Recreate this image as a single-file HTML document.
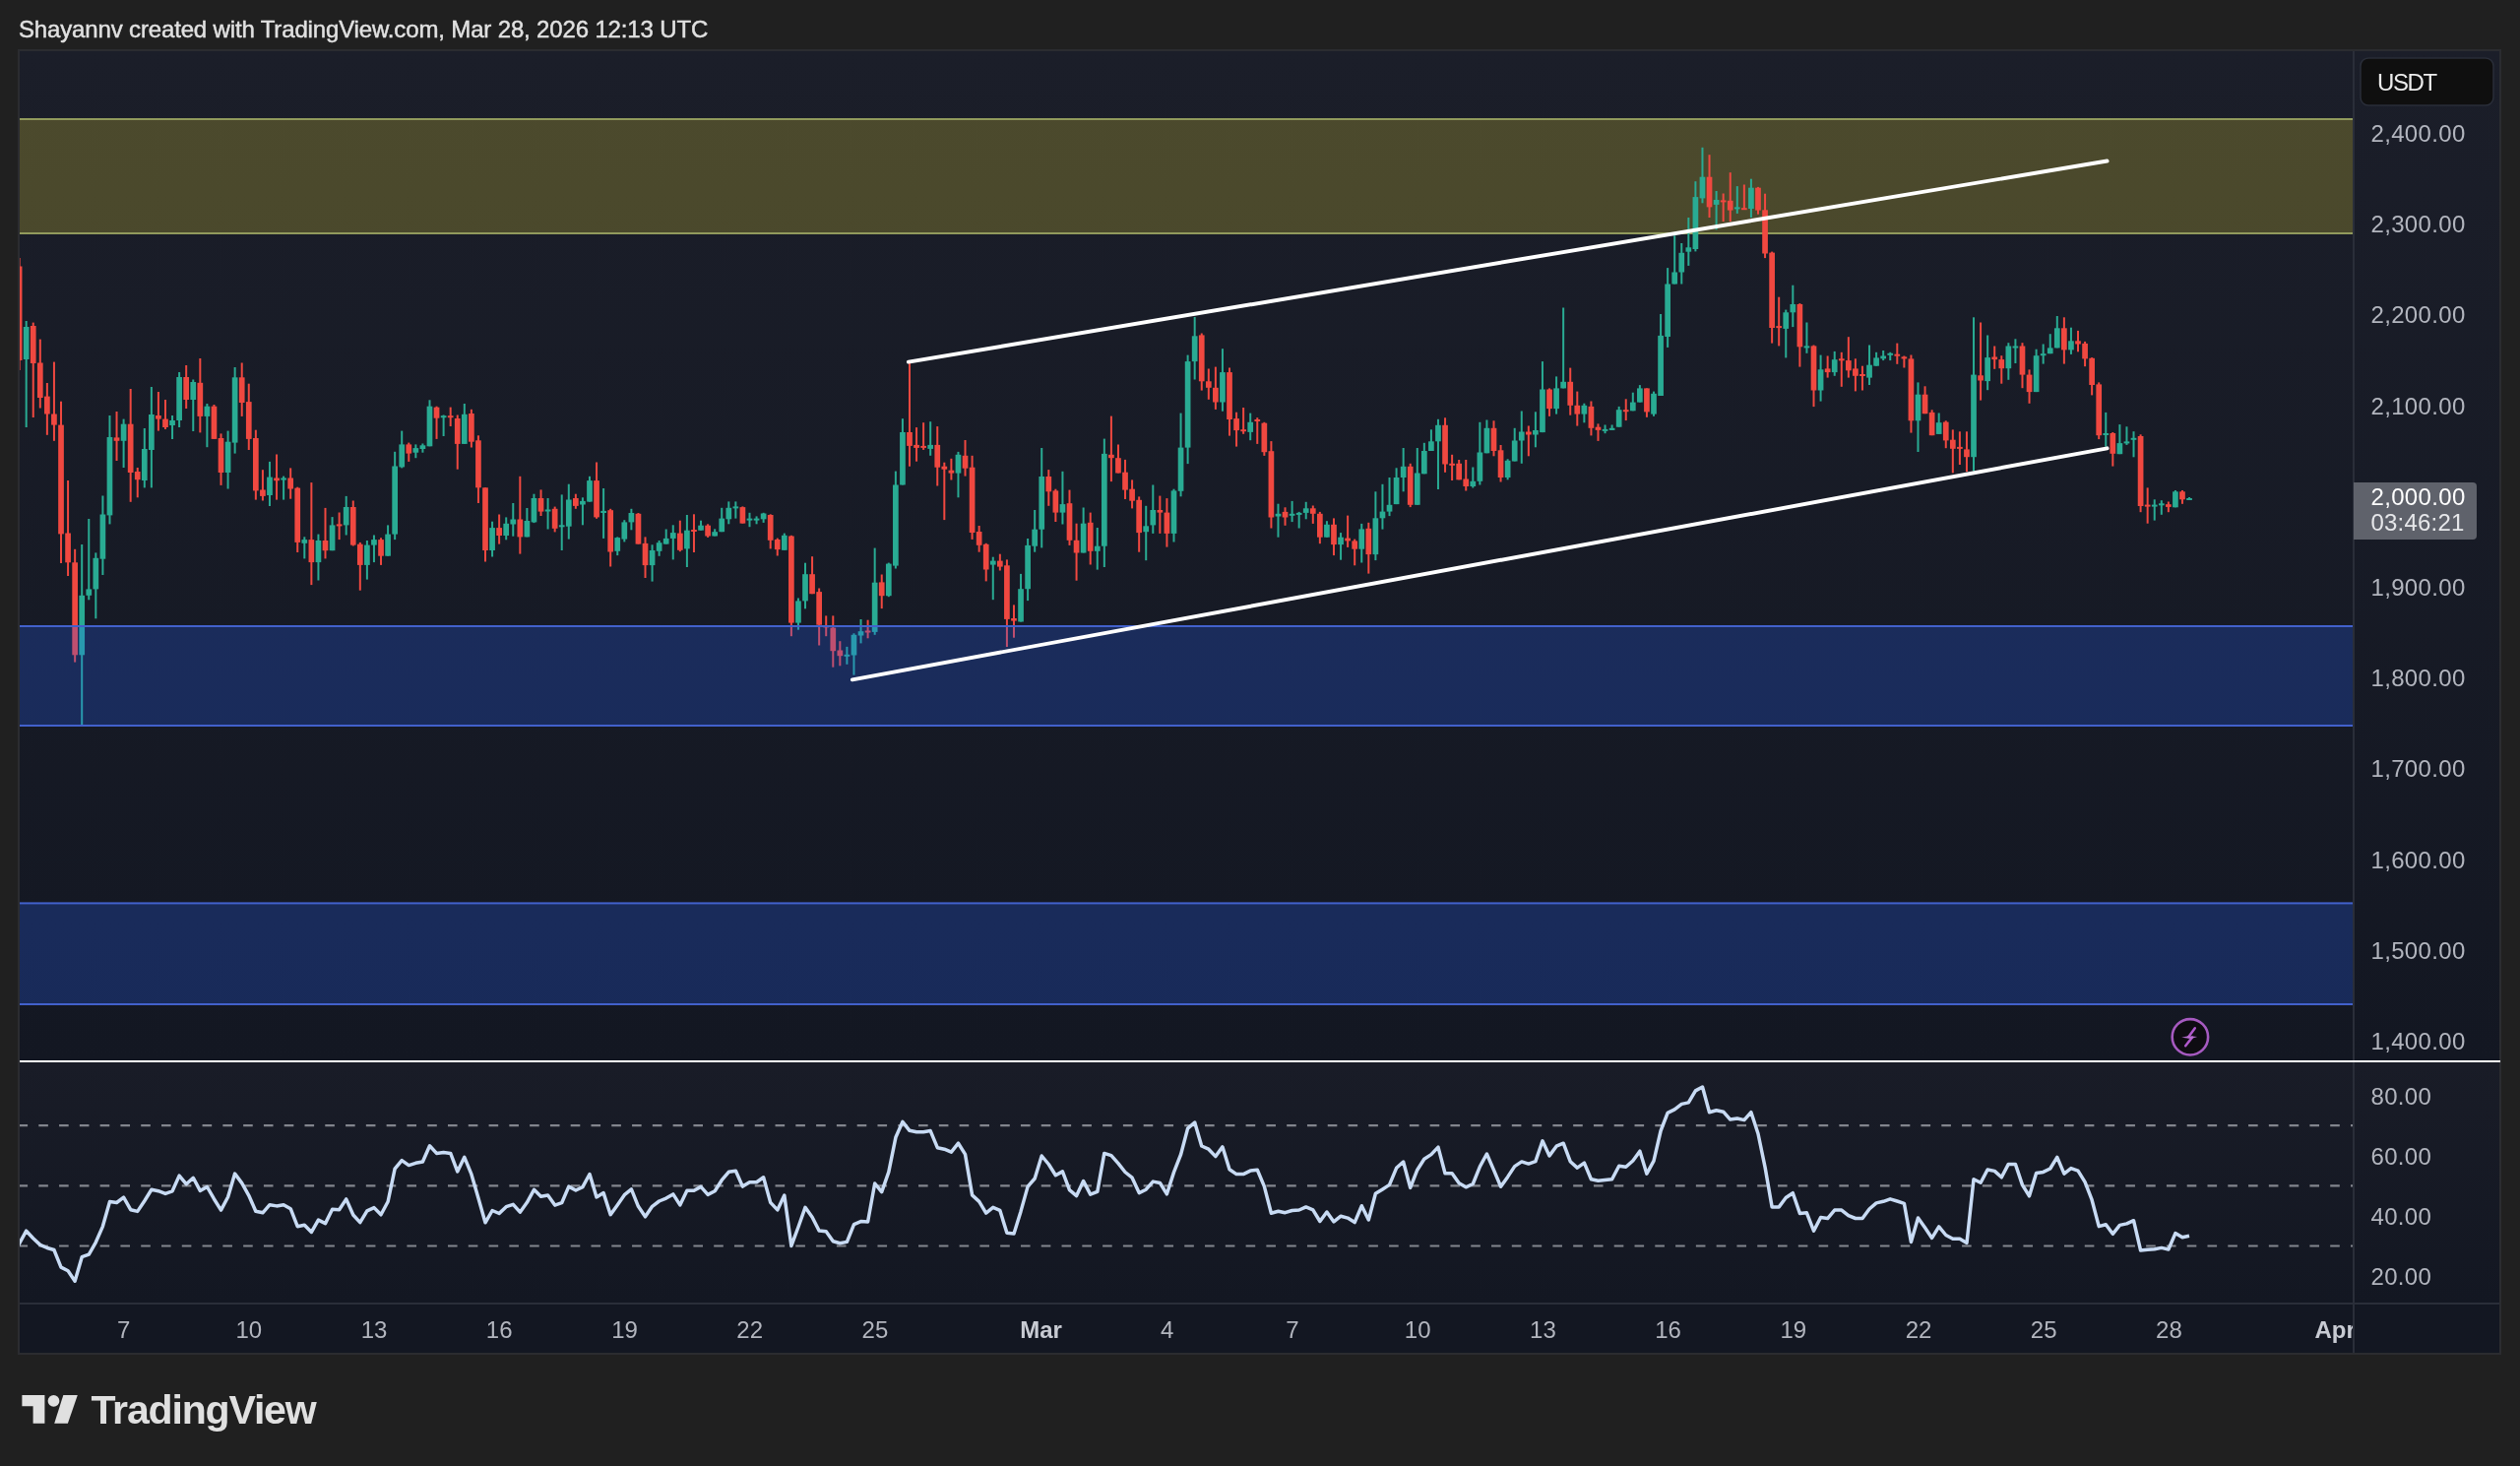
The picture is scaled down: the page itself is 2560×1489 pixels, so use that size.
<!DOCTYPE html><html><head><meta charset="utf-8"><style>
html,body{margin:0;padding:0;background:#202020;width:2560px;height:1489px;overflow:hidden}
svg{display:block;will-change:transform}
text{font-family:"Liberation Sans",sans-serif}
</style></head><body>
<svg width="2560" height="1489" viewBox="0 0 2560 1489">
<defs>
<linearGradient id="bg1" x1="0" y1="0" x2="0" y2="1"><stop offset="0" stop-color="#1b1e29"/><stop offset="1" stop-color="#131722"/></linearGradient>
<linearGradient id="bg2" x1="0" y1="0" x2="0" y2="1"><stop offset="0" stop-color="#191c27"/><stop offset="1" stop-color="#131722"/></linearGradient>
<clipPath id="mainclip"><rect x="20" y="52" width="2370" height="1025"/></clipPath>
<clipPath id="rsiclip"><rect x="20" y="1079" width="2370" height="244"/></clipPath>
<clipPath id="timeclip"><rect x="20" y="1325" width="2370" height="50"/></clipPath>
</defs>
<rect width="2560" height="1489" fill="#202020"/>
<text x="19" y="38" font-size="24" letter-spacing="-0.15" fill="#e1e1e1" stroke="#e1e1e1" stroke-width="0.45">Shayannv created with TradingView.com, Mar 28, 2026 12:13 UTC</text>
<rect x="18" y="50" width="2523" height="1326" fill="#2b2c30"/>
<rect x="20" y="52" width="2519" height="1025" fill="url(#bg1)"/>
<rect x="20" y="1079" width="2519" height="244" fill="url(#bg2)"/>
<rect x="20" y="1325" width="2519" height="49" fill="#131722"/>
<rect x="20" y="1323" width="2519" height="2" fill="#2a2e39"/>
<rect x="2390" y="52" width="2" height="1322" fill="#2a2e39"/>
<rect x="20" y="1077" width="2520" height="2" fill="#ffffff"/>
<g clip-path="url(#mainclip)">
<rect x="19" y="121" width="2371" height="116" fill="#ffeb3b" fill-opacity="0.215"/>
<rect x="19" y="120" width="2371" height="2" fill="#919a5c"/>
<rect x="19" y="236" width="2371" height="2" fill="#919a5c"/>
<rect x="18.61" y="262.0" width="2" height="114.0" fill="#f04840"/><rect x="25.68" y="326.0" width="2" height="108.0" fill="#29ab93"/><rect x="32.74" y="327.6" width="2" height="96.4" fill="#f04840"/><rect x="39.81" y="344.6" width="2" height="69.9" fill="#f04840"/><rect x="46.87" y="389.0" width="2" height="52.8" fill="#f04840"/><rect x="53.94" y="367.6" width="2" height="80.2" fill="#f04840"/><rect x="61.01" y="407.7" width="2" height="164.3" fill="#f04840"/><rect x="68.07" y="488.0" width="2" height="97.0" fill="#f04840"/><rect x="75.14" y="557.8" width="2" height="114.8" fill="#f04840"/><rect x="82.20" y="553.0" width="2" height="183.8" fill="#29ab93"/><rect x="89.27" y="527.0" width="2" height="82.3" fill="#29ab93"/><rect x="96.33" y="561.4" width="2" height="66.9" fill="#29ab93"/><rect x="103.40" y="503.5" width="2" height="80.5" fill="#29ab93"/><rect x="110.46" y="422.0" width="2" height="110.4" fill="#29ab93"/><rect x="117.53" y="418.0" width="2" height="50.0" fill="#f04840"/><rect x="124.60" y="425.6" width="2" height="49.4" fill="#29ab93"/><rect x="131.66" y="395.0" width="2" height="114.8" fill="#f04840"/><rect x="138.73" y="475.0" width="2" height="30.3" fill="#f04840"/><rect x="145.79" y="435.0" width="2" height="60.4" fill="#29ab93"/><rect x="152.86" y="393.0" width="2" height="102.4" fill="#29ab93"/><rect x="159.92" y="398.0" width="2" height="39.6" fill="#f04840"/><rect x="166.99" y="406.0" width="2" height="30.0" fill="#f04840"/><rect x="174.05" y="422.0" width="2" height="24.0" fill="#29ab93"/><rect x="181.12" y="378.0" width="2" height="56.0" fill="#29ab93"/><rect x="188.18" y="371.0" width="2" height="44.0" fill="#f04840"/><rect x="195.25" y="385.5" width="2" height="52.5" fill="#29ab93"/><rect x="202.32" y="364.0" width="2" height="75.4" fill="#f04840"/><rect x="209.38" y="410.0" width="2" height="44.2" fill="#29ab93"/><rect x="216.45" y="411.0" width="2" height="34.9" fill="#f04840"/><rect x="223.51" y="440.4" width="2" height="52.5" fill="#f04840"/><rect x="230.58" y="437.6" width="2" height="58.9" fill="#29ab93"/><rect x="237.64" y="373.0" width="2" height="87.6" fill="#29ab93"/><rect x="244.71" y="368.5" width="2" height="54.4" fill="#f04840"/><rect x="251.77" y="389.7" width="2" height="67.3" fill="#f04840"/><rect x="258.84" y="436.7" width="2" height="70.9" fill="#f04840"/><rect x="265.91" y="477.2" width="2" height="31.3" fill="#f04840"/><rect x="272.97" y="468.9" width="2" height="45.1" fill="#29ab93"/><rect x="280.04" y="461.5" width="2" height="46.1" fill="#f04840"/><rect x="287.10" y="483.6" width="2" height="24.0" fill="#29ab93"/><rect x="294.17" y="475.4" width="2" height="31.3" fill="#f04840"/><rect x="301.23" y="494.7" width="2" height="66.3" fill="#f04840"/><rect x="308.30" y="545.3" width="2" height="22.1" fill="#29ab93"/><rect x="315.36" y="490.1" width="2" height="104.0" fill="#f04840"/><rect x="322.43" y="542.6" width="2" height="46.9" fill="#29ab93"/><rect x="329.49" y="515.9" width="2" height="51.5" fill="#f04840"/><rect x="336.56" y="525.1" width="2" height="34.1" fill="#29ab93"/><rect x="343.63" y="520.5" width="2" height="27.6" fill="#f04840"/><rect x="350.69" y="503.9" width="2" height="39.6" fill="#29ab93"/><rect x="357.76" y="508.5" width="2" height="46.0" fill="#f04840"/><rect x="364.82" y="550.9" width="2" height="48.8" fill="#f04840"/><rect x="371.89" y="549.0" width="2" height="39.6" fill="#29ab93"/><rect x="378.95" y="543.5" width="2" height="27.6" fill="#29ab93"/><rect x="386.02" y="546.3" width="2" height="27.6" fill="#f04840"/><rect x="393.08" y="533.4" width="2" height="31.3" fill="#29ab93"/><rect x="400.15" y="458.8" width="2" height="89.3" fill="#29ab93"/><rect x="407.22" y="437.6" width="2" height="37.8" fill="#29ab93"/><rect x="414.28" y="449.6" width="2" height="19.3" fill="#f04840"/><rect x="421.35" y="451.4" width="2" height="13.8" fill="#29ab93"/><rect x="428.41" y="450.5" width="2" height="9.2" fill="#29ab93"/><rect x="435.48" y="406.3" width="2" height="47.0" fill="#29ab93"/><rect x="442.54" y="412.7" width="2" height="33.2" fill="#f04840"/><rect x="449.61" y="421.5" width="2" height="21.5" fill="#29ab93"/><rect x="456.67" y="413.6" width="2" height="19.4" fill="#f04840"/><rect x="463.74" y="421.5" width="2" height="55.2" fill="#f04840"/><rect x="470.80" y="410.0" width="2" height="40.9" fill="#29ab93"/><rect x="477.87" y="415.8" width="2" height="38.7" fill="#f04840"/><rect x="484.94" y="442.3" width="2" height="68.7" fill="#f04840"/><rect x="492.00" y="495.3" width="2" height="75.2" fill="#f04840"/><rect x="499.07" y="529.7" width="2" height="35.8" fill="#29ab93"/><rect x="506.13" y="522.5" width="2" height="30.1" fill="#f04840"/><rect x="513.20" y="525.4" width="2" height="22.9" fill="#29ab93"/><rect x="520.26" y="511.0" width="2" height="33.7" fill="#29ab93"/><rect x="527.33" y="483.8" width="2" height="78.8" fill="#f04840"/><rect x="534.39" y="516.0" width="2" height="29.4" fill="#29ab93"/><rect x="541.46" y="501.7" width="2" height="29.4" fill="#29ab93"/><rect x="548.53" y="497.4" width="2" height="26.6" fill="#f04840"/><rect x="555.59" y="506.0" width="2" height="31.5" fill="#29ab93"/><rect x="562.66" y="514.6" width="2" height="25.8" fill="#f04840"/><rect x="569.72" y="502.4" width="2" height="56.6" fill="#29ab93"/><rect x="576.79" y="491.7" width="2" height="55.9" fill="#29ab93"/><rect x="583.85" y="501.7" width="2" height="15.1" fill="#f04840"/><rect x="590.92" y="505.3" width="2" height="28.0" fill="#29ab93"/><rect x="597.98" y="483.8" width="2" height="25.8" fill="#29ab93"/><rect x="605.05" y="469.5" width="2" height="57.3" fill="#f04840"/><rect x="612.11" y="496.0" width="2" height="50.9" fill="#29ab93"/><rect x="619.18" y="516.8" width="2" height="58.7" fill="#f04840"/><rect x="626.25" y="545.4" width="2" height="18.7" fill="#29ab93"/><rect x="633.31" y="528.2" width="2" height="22.2" fill="#29ab93"/><rect x="640.38" y="516.8" width="2" height="21.5" fill="#29ab93"/><rect x="647.44" y="521.0" width="2" height="31.6" fill="#f04840"/><rect x="654.51" y="545.4" width="2" height="41.6" fill="#f04840"/><rect x="661.57" y="553.3" width="2" height="37.3" fill="#29ab93"/><rect x="668.64" y="549.0" width="2" height="15.8" fill="#29ab93"/><rect x="675.70" y="537.5" width="2" height="15.1" fill="#29ab93"/><rect x="682.77" y="533.3" width="2" height="35.1" fill="#29ab93"/><rect x="689.84" y="528.7" width="2" height="31.5" fill="#f04840"/><rect x="696.90" y="523.0" width="2" height="53.0" fill="#29ab93"/><rect x="703.97" y="522.3" width="2" height="38.7" fill="#f04840"/><rect x="711.03" y="528.7" width="2" height="10.0" fill="#29ab93"/><rect x="718.10" y="532.3" width="2" height="13.6" fill="#f04840"/><rect x="725.16" y="537.3" width="2" height="7.2" fill="#29ab93"/><rect x="732.23" y="515.8" width="2" height="24.4" fill="#29ab93"/><rect x="739.29" y="509.4" width="2" height="22.9" fill="#29ab93"/><rect x="746.36" y="509.4" width="2" height="17.2" fill="#29ab93"/><rect x="753.42" y="514.4" width="2" height="17.2" fill="#f04840"/><rect x="760.49" y="520.8" width="2" height="14.4" fill="#29ab93"/><rect x="767.56" y="524.4" width="2" height="7.9" fill="#29ab93"/><rect x="774.62" y="520.8" width="2" height="10.1" fill="#29ab93"/><rect x="781.69" y="522.3" width="2" height="35.1" fill="#f04840"/><rect x="788.75" y="546.6" width="2" height="17.9" fill="#f04840"/><rect x="795.82" y="541.6" width="2" height="17.2" fill="#29ab93"/><rect x="802.88" y="543.8" width="2" height="102.4" fill="#f04840"/><rect x="809.95" y="607.5" width="2" height="32.2" fill="#29ab93"/><rect x="817.01" y="571.7" width="2" height="46.6" fill="#29ab93"/><rect x="824.08" y="565.2" width="2" height="38.0" fill="#f04840"/><rect x="831.15" y="597.5" width="2" height="58.0" fill="#f04840"/><rect x="838.21" y="625.4" width="2" height="20.8" fill="#f04840"/><rect x="845.28" y="625.4" width="2" height="52.3" fill="#f04840"/><rect x="852.34" y="651.2" width="2" height="25.1" fill="#f04840"/><rect x="859.41" y="656.9" width="2" height="17.9" fill="#29ab93"/><rect x="866.47" y="643.3" width="2" height="42.3" fill="#29ab93"/><rect x="873.54" y="629.0" width="2" height="24.4" fill="#29ab93"/><rect x="880.60" y="629.7" width="2" height="18.6" fill="#f04840"/><rect x="887.67" y="556.6" width="2" height="88.2" fill="#29ab93"/><rect x="894.73" y="583.5" width="2" height="34.6" fill="#f04840"/><rect x="901.80" y="571.6" width="2" height="34.6" fill="#29ab93"/><rect x="908.87" y="478.6" width="2" height="98.9" fill="#29ab93"/><rect x="915.93" y="425.2" width="2" height="67.3" fill="#29ab93"/><rect x="923.00" y="367.9" width="2" height="105.8" fill="#f04840"/><rect x="930.06" y="434.1" width="2" height="34.6" fill="#f04840"/><rect x="937.13" y="429.2" width="2" height="27.7" fill="#f04840"/><rect x="944.19" y="428.2" width="2" height="34.6" fill="#29ab93"/><rect x="951.26" y="433.1" width="2" height="60.4" fill="#f04840"/><rect x="958.32" y="469.7" width="2" height="58.4" fill="#f04840"/><rect x="965.39" y="465.8" width="2" height="21.7" fill="#f04840"/><rect x="972.46" y="458.9" width="2" height="46.4" fill="#29ab93"/><rect x="979.52" y="447.0" width="2" height="36.6" fill="#f04840"/><rect x="986.59" y="462.8" width="2" height="85.1" fill="#f04840"/><rect x="993.65" y="534.0" width="2" height="26.7" fill="#f04840"/><rect x="1000.72" y="551.8" width="2" height="38.6" fill="#f04840"/><rect x="1007.78" y="565.7" width="2" height="43.5" fill="#29ab93"/><rect x="1014.85" y="562.7" width="2" height="16.8" fill="#f04840"/><rect x="1021.91" y="568.4" width="2" height="88.6" fill="#f04840"/><rect x="1028.98" y="614.4" width="2" height="33.3" fill="#f04840"/><rect x="1036.04" y="582.9" width="2" height="48.6" fill="#29ab93"/><rect x="1043.11" y="547.0" width="2" height="63.1" fill="#29ab93"/><rect x="1050.18" y="518.0" width="2" height="42.7" fill="#29ab93"/><rect x="1057.24" y="455.0" width="2" height="101.4" fill="#29ab93"/><rect x="1064.31" y="477.1" width="2" height="36.7" fill="#f04840"/><rect x="1071.37" y="496.7" width="2" height="33.3" fill="#f04840"/><rect x="1078.44" y="478.8" width="2" height="53.7" fill="#29ab93"/><rect x="1085.50" y="497.6" width="2" height="56.3" fill="#f04840"/><rect x="1092.57" y="531.7" width="2" height="58.0" fill="#f04840"/><rect x="1099.63" y="515.5" width="2" height="46.0" fill="#29ab93"/><rect x="1106.70" y="520.6" width="2" height="52.9" fill="#f04840"/><rect x="1113.77" y="536.0" width="2" height="42.6" fill="#29ab93"/><rect x="1120.83" y="445.6" width="2" height="130.4" fill="#29ab93"/><rect x="1127.90" y="422.6" width="2" height="66.5" fill="#f04840"/><rect x="1134.96" y="451.5" width="2" height="29.0" fill="#f04840"/><rect x="1142.03" y="466.9" width="2" height="40.1" fill="#f04840"/><rect x="1149.09" y="487.4" width="2" height="29.0" fill="#f04840"/><rect x="1156.16" y="504.4" width="2" height="56.3" fill="#f04840"/><rect x="1163.22" y="513.8" width="2" height="55.4" fill="#29ab93"/><rect x="1170.29" y="492.5" width="2" height="49.4" fill="#29ab93"/><rect x="1177.35" y="503.6" width="2" height="38.3" fill="#f04840"/><rect x="1184.42" y="506.1" width="2" height="49.5" fill="#f04840"/><rect x="1191.49" y="496.7" width="2" height="53.8" fill="#29ab93"/><rect x="1198.55" y="419.6" width="2" height="84.7" fill="#29ab93"/><rect x="1205.62" y="360.6" width="2" height="110.5" fill="#29ab93"/><rect x="1212.68" y="322.0" width="2" height="63.5" fill="#29ab93"/><rect x="1219.75" y="338.5" width="2" height="58.1" fill="#f04840"/><rect x="1226.81" y="374.5" width="2" height="31.3" fill="#f04840"/><rect x="1233.88" y="372.6" width="2" height="43.3" fill="#f04840"/><rect x="1240.94" y="354.2" width="2" height="63.5" fill="#29ab93"/><rect x="1248.01" y="373.5" width="2" height="69.1" fill="#f04840"/><rect x="1255.08" y="418.7" width="2" height="34.9" fill="#f04840"/><rect x="1262.14" y="414.0" width="2" height="26.8" fill="#f04840"/><rect x="1269.21" y="419.6" width="2" height="27.6" fill="#29ab93"/><rect x="1276.27" y="424.2" width="2" height="26.7" fill="#f04840"/><rect x="1283.34" y="428.8" width="2" height="34.1" fill="#f04840"/><rect x="1290.40" y="448.1" width="2" height="88.4" fill="#f04840"/><rect x="1297.47" y="511.7" width="2" height="34.0" fill="#29ab93"/><rect x="1304.53" y="515.3" width="2" height="18.5" fill="#f04840"/><rect x="1311.60" y="508.9" width="2" height="21.2" fill="#29ab93"/><rect x="1318.66" y="519.9" width="2" height="16.6" fill="#29ab93"/><rect x="1325.73" y="509.8" width="2" height="17.5" fill="#29ab93"/><rect x="1332.80" y="513.5" width="2" height="18.4" fill="#f04840"/><rect x="1339.86" y="519.9" width="2" height="32.3" fill="#f04840"/><rect x="1346.93" y="529.2" width="2" height="16.5" fill="#29ab93"/><rect x="1353.99" y="526.4" width="2" height="37.7" fill="#f04840"/><rect x="1361.06" y="541.1" width="2" height="27.6" fill="#29ab93"/><rect x="1368.12" y="523.6" width="2" height="32.3" fill="#f04840"/><rect x="1375.19" y="547.6" width="2" height="26.7" fill="#f04840"/><rect x="1382.25" y="531.9" width="2" height="39.6" fill="#29ab93"/><rect x="1389.32" y="530.8" width="2" height="51.8" fill="#f04840"/><rect x="1396.39" y="499.3" width="2" height="69.8" fill="#29ab93"/><rect x="1403.45" y="491.8" width="2" height="45.8" fill="#29ab93"/><rect x="1410.52" y="485.0" width="2" height="39.1" fill="#29ab93"/><rect x="1417.58" y="475.3" width="2" height="36.8" fill="#29ab93"/><rect x="1424.65" y="455.0" width="2" height="44.3" fill="#29ab93"/><rect x="1431.71" y="470.8" width="2" height="44.3" fill="#f04840"/><rect x="1438.78" y="455.0" width="2" height="57.8" fill="#29ab93"/><rect x="1445.84" y="449.8" width="2" height="31.5" fill="#29ab93"/><rect x="1452.91" y="436.3" width="2" height="21.7" fill="#29ab93"/><rect x="1459.97" y="425.8" width="2" height="71.2" fill="#29ab93"/><rect x="1467.04" y="424.3" width="2" height="55.5" fill="#f04840"/><rect x="1474.11" y="461.8" width="2" height="26.2" fill="#f04840"/><rect x="1481.17" y="467.0" width="2" height="20.3" fill="#f04840"/><rect x="1488.24" y="467.0" width="2" height="31.5" fill="#f04840"/><rect x="1495.30" y="474.5" width="2" height="21.0" fill="#29ab93"/><rect x="1502.37" y="428.8" width="2" height="63.7" fill="#29ab93"/><rect x="1509.43" y="426.5" width="2" height="33.8" fill="#29ab93"/><rect x="1516.50" y="427.3" width="2" height="36.0" fill="#f04840"/><rect x="1523.56" y="452.0" width="2" height="37.5" fill="#f04840"/><rect x="1530.63" y="466.3" width="2" height="21.0" fill="#29ab93"/><rect x="1537.70" y="434.8" width="2" height="33.7" fill="#29ab93"/><rect x="1544.76" y="417.5" width="2" height="53.3" fill="#29ab93"/><rect x="1551.83" y="432.5" width="2" height="30.8" fill="#f04840"/><rect x="1558.89" y="418.3" width="2" height="36.0" fill="#29ab93"/><rect x="1565.96" y="367.1" width="2" height="72.0" fill="#29ab93"/><rect x="1573.02" y="394.4" width="2" height="28.4" fill="#f04840"/><rect x="1580.09" y="382.4" width="2" height="38.2" fill="#29ab93"/><rect x="1587.15" y="312.5" width="2" height="81.9" fill="#29ab93"/><rect x="1594.22" y="373.6" width="2" height="48.1" fill="#f04840"/><rect x="1601.28" y="397.6" width="2" height="35.0" fill="#f04840"/><rect x="1608.35" y="409.7" width="2" height="19.6" fill="#29ab93"/><rect x="1615.42" y="407.5" width="2" height="34.9" fill="#f04840"/><rect x="1622.48" y="430.4" width="2" height="17.5" fill="#f04840"/><rect x="1629.55" y="431.5" width="2" height="8.7" fill="#29ab93"/><rect x="1636.61" y="431.5" width="2" height="5.4" fill="#29ab93"/><rect x="1643.68" y="412.9" width="2" height="20.8" fill="#29ab93"/><rect x="1650.74" y="405.3" width="2" height="21.8" fill="#f04840"/><rect x="1657.81" y="398.7" width="2" height="18.6" fill="#29ab93"/><rect x="1664.87" y="391.1" width="2" height="17.5" fill="#29ab93"/><rect x="1671.94" y="394.4" width="2" height="29.4" fill="#f04840"/><rect x="1679.01" y="397.6" width="2" height="25.2" fill="#29ab93"/><rect x="1686.07" y="319.0" width="2" height="83.0" fill="#29ab93"/><rect x="1693.14" y="272.1" width="2" height="80.8" fill="#29ab93"/><rect x="1700.20" y="239.3" width="2" height="49.2" fill="#29ab93"/><rect x="1707.27" y="247.0" width="2" height="41.5" fill="#29ab93"/><rect x="1714.33" y="221.0" width="2" height="48.9" fill="#29ab93"/><rect x="1721.40" y="184.2" width="2" height="71.2" fill="#29ab93"/><rect x="1728.46" y="149.8" width="2" height="56.5" fill="#29ab93"/><rect x="1735.53" y="157.2" width="2" height="63.8" fill="#f04840"/><rect x="1742.59" y="194.0" width="2" height="39.3" fill="#29ab93"/><rect x="1749.66" y="196.5" width="2" height="28.6" fill="#f04840"/><rect x="1756.73" y="175.2" width="2" height="49.9" fill="#f04840"/><rect x="1763.79" y="189.1" width="2" height="27.8" fill="#29ab93"/><rect x="1770.86" y="187.5" width="2" height="24.5" fill="#f04840"/><rect x="1777.92" y="181.7" width="2" height="39.3" fill="#29ab93"/><rect x="1784.99" y="189.9" width="2" height="27.8" fill="#f04840"/><rect x="1792.05" y="196.7" width="2" height="65.4" fill="#f04840"/><rect x="1799.12" y="255.6" width="2" height="93.0" fill="#f04840"/><rect x="1806.18" y="301.7" width="2" height="49.7" fill="#f04840"/><rect x="1813.25" y="314.6" width="2" height="48.8" fill="#29ab93"/><rect x="1820.32" y="289.7" width="2" height="42.4" fill="#29ab93"/><rect x="1827.38" y="308.1" width="2" height="64.5" fill="#f04840"/><rect x="1834.45" y="327.5" width="2" height="31.3" fill="#29ab93"/><rect x="1841.51" y="350.5" width="2" height="62.6" fill="#f04840"/><rect x="1848.58" y="360.6" width="2" height="47.0" fill="#29ab93"/><rect x="1855.64" y="361.5" width="2" height="22.1" fill="#f04840"/><rect x="1862.71" y="356.9" width="2" height="24.9" fill="#29ab93"/><rect x="1869.77" y="357.8" width="2" height="35.0" fill="#f04840"/><rect x="1876.84" y="342.2" width="2" height="41.4" fill="#f04840"/><rect x="1883.90" y="364.3" width="2" height="33.1" fill="#f04840"/><rect x="1890.97" y="371.7" width="2" height="24.8" fill="#f04840"/><rect x="1898.04" y="350.5" width="2" height="40.5" fill="#29ab93"/><rect x="1905.10" y="357.8" width="2" height="13.9" fill="#29ab93"/><rect x="1912.17" y="356.0" width="2" height="10.1" fill="#29ab93"/><rect x="1919.23" y="357.8" width="2" height="8.3" fill="#29ab93"/><rect x="1926.30" y="348.6" width="2" height="21.2" fill="#f04840"/><rect x="1933.36" y="361.5" width="2" height="12.0" fill="#f04840"/><rect x="1940.43" y="360.5" width="2" height="79.1" fill="#f04840"/><rect x="1947.49" y="388.4" width="2" height="70.6" fill="#29ab93"/><rect x="1954.56" y="392.3" width="2" height="27.9" fill="#f04840"/><rect x="1961.63" y="416.3" width="2" height="25.9" fill="#f04840"/><rect x="1968.69" y="419.5" width="2" height="21.4" fill="#29ab93"/><rect x="1975.76" y="427.3" width="2" height="27.9" fill="#f04840"/><rect x="1982.82" y="436.4" width="2" height="44.0" fill="#f04840"/><rect x="1989.89" y="438.3" width="2" height="33.7" fill="#f04840"/><rect x="1996.95" y="438.3" width="2" height="40.8" fill="#f04840"/><rect x="2004.02" y="322.3" width="2" height="156.2" fill="#29ab93"/><rect x="2011.08" y="327.5" width="2" height="79.1" fill="#f04840"/><rect x="2018.15" y="340.5" width="2" height="55.7" fill="#29ab93"/><rect x="2025.21" y="351.5" width="2" height="23.3" fill="#f04840"/><rect x="2032.28" y="361.2" width="2" height="28.5" fill="#f04840"/><rect x="2039.35" y="348.2" width="2" height="37.6" fill="#29ab93"/><rect x="2046.41" y="344.3" width="2" height="24.7" fill="#29ab93"/><rect x="2053.48" y="348.2" width="2" height="46.0" fill="#f04840"/><rect x="2060.54" y="375.4" width="2" height="34.4" fill="#f04840"/><rect x="2067.61" y="354.7" width="2" height="43.4" fill="#29ab93"/><rect x="2074.67" y="349.5" width="2" height="20.1" fill="#29ab93"/><rect x="2081.74" y="339.2" width="2" height="20.0" fill="#29ab93"/><rect x="2088.80" y="321.0" width="2" height="32.4" fill="#29ab93"/><rect x="2095.87" y="322.3" width="2" height="47.3" fill="#f04840"/><rect x="2102.94" y="332.7" width="2" height="27.2" fill="#29ab93"/><rect x="2110.00" y="335.9" width="2" height="21.4" fill="#f04840"/><rect x="2117.07" y="346.9" width="2" height="25.3" fill="#f04840"/><rect x="2124.13" y="363.1" width="2" height="38.3" fill="#f04840"/><rect x="2131.20" y="388.4" width="2" height="57.7" fill="#f04840"/><rect x="2138.26" y="418.9" width="2" height="34.8" fill="#29ab93"/><rect x="2145.33" y="439.0" width="2" height="34.6" fill="#f04840"/><rect x="2152.39" y="431.1" width="2" height="30.1" fill="#29ab93"/><rect x="2159.46" y="433.3" width="2" height="18.6" fill="#29ab93"/><rect x="2166.52" y="438.2" width="2" height="26.1" fill="#29ab93"/><rect x="2173.59" y="441.3" width="2" height="78.9" fill="#f04840"/><rect x="2180.66" y="495.4" width="2" height="36.3" fill="#f04840"/><rect x="2187.72" y="507.3" width="2" height="21.3" fill="#29ab93"/><rect x="2194.79" y="508.2" width="2" height="14.6" fill="#29ab93"/><rect x="2201.85" y="509.5" width="2" height="10.7" fill="#f04840"/><rect x="2208.92" y="498.0" width="2" height="17.3" fill="#29ab93"/><rect x="2215.98" y="498.0" width="2" height="13.8" fill="#f04840"/><rect x="2223.05" y="505.0" width="2" height="3.0" fill="#29ab93"/>
<rect x="16.76" y="270.5" width="5.7" height="95.5" fill="#f04840"/><rect x="23.83" y="332.0" width="5.7" height="33.0" fill="#29ab93"/><rect x="30.89" y="331.0" width="5.7" height="38.0" fill="#f04840"/><rect x="37.96" y="368.5" width="5.7" height="35.5" fill="#f04840"/><rect x="45.02" y="402.6" width="5.7" height="17.9" fill="#f04840"/><rect x="52.09" y="420.5" width="5.7" height="11.1" fill="#f04840"/><rect x="59.16" y="431.6" width="5.7" height="110.8" fill="#f04840"/><rect x="66.22" y="541.5" width="5.7" height="29.8" fill="#f04840"/><rect x="73.29" y="571.3" width="5.7" height="94.0" fill="#f04840"/><rect x="80.35" y="604.8" width="5.7" height="60.5" fill="#29ab93"/><rect x="87.42" y="598.4" width="5.7" height="6.4" fill="#29ab93"/><rect x="94.48" y="566.8" width="5.7" height="31.6" fill="#29ab93"/><rect x="101.55" y="522.5" width="5.7" height="45.2" fill="#29ab93"/><rect x="108.61" y="444.0" width="5.7" height="79.4" fill="#29ab93"/><rect x="115.68" y="444.4" width="5.7" height="3.4" fill="#f04840"/><rect x="122.75" y="430.7" width="5.7" height="17.1" fill="#29ab93"/><rect x="129.81" y="430.7" width="5.7" height="49.3" fill="#f04840"/><rect x="136.88" y="479.0" width="5.7" height="8.2" fill="#f04840"/><rect x="143.94" y="456.0" width="5.7" height="32.0" fill="#29ab93"/><rect x="151.01" y="421.0" width="5.7" height="36.0" fill="#29ab93"/><rect x="158.07" y="422.0" width="5.7" height="3.6" fill="#f04840"/><rect x="165.14" y="425.6" width="5.7" height="8.4" fill="#f04840"/><rect x="172.20" y="427.0" width="5.7" height="5.0" fill="#29ab93"/><rect x="179.27" y="383.0" width="5.7" height="44.0" fill="#29ab93"/><rect x="186.33" y="383.0" width="5.7" height="23.0" fill="#f04840"/><rect x="193.40" y="388.0" width="5.7" height="18.0" fill="#29ab93"/><rect x="200.47" y="388.8" width="5.7" height="34.1" fill="#f04840"/><rect x="207.53" y="412.7" width="5.7" height="10.2" fill="#29ab93"/><rect x="214.60" y="412.7" width="5.7" height="33.2" fill="#f04840"/><rect x="221.66" y="445.0" width="5.7" height="35.0" fill="#f04840"/><rect x="228.73" y="448.7" width="5.7" height="31.3" fill="#29ab93"/><rect x="235.79" y="383.3" width="5.7" height="66.3" fill="#29ab93"/><rect x="242.86" y="383.3" width="5.7" height="25.7" fill="#f04840"/><rect x="249.92" y="408.1" width="5.7" height="37.8" fill="#f04840"/><rect x="256.99" y="445.0" width="5.7" height="53.4" fill="#f04840"/><rect x="264.06" y="497.5" width="5.7" height="6.4" fill="#f04840"/><rect x="271.12" y="484.6" width="5.7" height="18.4" fill="#29ab93"/><rect x="278.19" y="485.5" width="5.7" height="2.7" fill="#f04840"/><rect x="285.25" y="485.5" width="5.7" height="2.0" fill="#29ab93"/><rect x="292.32" y="485.5" width="5.7" height="11.0" fill="#f04840"/><rect x="299.38" y="495.6" width="5.7" height="55.3" fill="#f04840"/><rect x="306.45" y="548.1" width="5.7" height="3.7" fill="#29ab93"/><rect x="313.51" y="548.1" width="5.7" height="23.0" fill="#f04840"/><rect x="320.58" y="549.0" width="5.7" height="22.1" fill="#29ab93"/><rect x="327.64" y="549.0" width="5.7" height="10.2" fill="#f04840"/><rect x="334.71" y="533.4" width="5.7" height="25.8" fill="#29ab93"/><rect x="341.78" y="532.4" width="5.7" height="2.0" fill="#f04840"/><rect x="348.84" y="515.0" width="5.7" height="18.4" fill="#29ab93"/><rect x="355.91" y="515.0" width="5.7" height="38.6" fill="#f04840"/><rect x="362.97" y="552.7" width="5.7" height="21.2" fill="#f04840"/><rect x="370.04" y="553.6" width="5.7" height="20.3" fill="#29ab93"/><rect x="377.10" y="548.1" width="5.7" height="5.5" fill="#29ab93"/><rect x="384.17" y="548.1" width="5.7" height="16.6" fill="#f04840"/><rect x="391.23" y="542.6" width="5.7" height="22.1" fill="#29ab93"/><rect x="398.30" y="473.5" width="5.7" height="69.1" fill="#29ab93"/><rect x="405.37" y="451.4" width="5.7" height="23.0" fill="#29ab93"/><rect x="412.43" y="451.4" width="5.7" height="9.2" fill="#f04840"/><rect x="419.50" y="455.1" width="5.7" height="4.6" fill="#29ab93"/><rect x="426.56" y="452.3" width="5.7" height="3.7" fill="#29ab93"/><rect x="433.63" y="412.7" width="5.7" height="40.6" fill="#29ab93"/><rect x="440.69" y="413.7" width="5.7" height="11.0" fill="#f04840"/><rect x="447.76" y="422.2" width="5.7" height="2.0" fill="#29ab93"/><rect x="454.82" y="422.2" width="5.7" height="2.0" fill="#f04840"/><rect x="461.89" y="425.0" width="5.7" height="25.9" fill="#f04840"/><rect x="468.95" y="420.8" width="5.7" height="30.1" fill="#29ab93"/><rect x="476.02" y="420.0" width="5.7" height="28.7" fill="#f04840"/><rect x="483.09" y="447.3" width="5.7" height="48.0" fill="#f04840"/><rect x="490.15" y="495.3" width="5.7" height="63.7" fill="#f04840"/><rect x="497.22" y="536.1" width="5.7" height="22.9" fill="#29ab93"/><rect x="504.28" y="536.1" width="5.7" height="7.9" fill="#f04840"/><rect x="511.35" y="531.8" width="5.7" height="12.2" fill="#29ab93"/><rect x="518.41" y="527.5" width="5.7" height="5.0" fill="#29ab93"/><rect x="525.48" y="527.5" width="5.7" height="17.9" fill="#f04840"/><rect x="532.54" y="529.0" width="5.7" height="16.4" fill="#29ab93"/><rect x="539.61" y="506.0" width="5.7" height="24.4" fill="#29ab93"/><rect x="546.68" y="506.0" width="5.7" height="13.6" fill="#f04840"/><rect x="553.74" y="517.5" width="5.7" height="2.0" fill="#29ab93"/><rect x="560.81" y="516.8" width="5.7" height="20.0" fill="#f04840"/><rect x="567.87" y="533.3" width="5.7" height="2.0" fill="#29ab93"/><rect x="574.94" y="507.5" width="5.7" height="27.2" fill="#29ab93"/><rect x="582.00" y="506.0" width="5.7" height="7.9" fill="#f04840"/><rect x="589.07" y="508.9" width="5.7" height="3.6" fill="#29ab93"/><rect x="596.13" y="488.1" width="5.7" height="21.5" fill="#29ab93"/><rect x="603.20" y="488.1" width="5.7" height="37.3" fill="#f04840"/><rect x="610.26" y="518.9" width="5.7" height="2.1" fill="#29ab93"/><rect x="617.33" y="518.2" width="5.7" height="42.3" fill="#f04840"/><rect x="624.40" y="546.1" width="5.7" height="13.7" fill="#29ab93"/><rect x="631.46" y="530.4" width="5.7" height="17.2" fill="#29ab93"/><rect x="638.53" y="521.0" width="5.7" height="9.4" fill="#29ab93"/><rect x="645.59" y="521.8" width="5.7" height="30.8" fill="#f04840"/><rect x="652.66" y="551.9" width="5.7" height="22.2" fill="#f04840"/><rect x="659.72" y="559.0" width="5.7" height="15.1" fill="#29ab93"/><rect x="666.79" y="551.2" width="5.7" height="8.6" fill="#29ab93"/><rect x="673.85" y="546.9" width="5.7" height="5.7" fill="#29ab93"/><rect x="680.92" y="541.1" width="5.7" height="5.8" fill="#29ab93"/><rect x="687.99" y="541.6" width="5.7" height="17.2" fill="#f04840"/><rect x="695.05" y="538.7" width="5.7" height="18.7" fill="#29ab93"/><rect x="702.12" y="538.0" width="5.7" height="2.0" fill="#f04840"/><rect x="709.18" y="533.7" width="5.7" height="5.0" fill="#29ab93"/><rect x="716.25" y="533.7" width="5.7" height="10.8" fill="#f04840"/><rect x="723.31" y="540.2" width="5.7" height="4.3" fill="#29ab93"/><rect x="730.38" y="526.6" width="5.7" height="13.6" fill="#29ab93"/><rect x="737.44" y="515.8" width="5.7" height="11.5" fill="#29ab93"/><rect x="744.51" y="514.4" width="5.7" height="2.0" fill="#29ab93"/><rect x="751.57" y="515.1" width="5.7" height="16.5" fill="#f04840"/><rect x="758.64" y="526.6" width="5.7" height="2.0" fill="#29ab93"/><rect x="765.71" y="526.6" width="5.7" height="2.0" fill="#29ab93"/><rect x="772.77" y="521.5" width="5.7" height="5.8" fill="#29ab93"/><rect x="779.84" y="523.0" width="5.7" height="25.8" fill="#f04840"/><rect x="786.90" y="548.0" width="5.7" height="10.1" fill="#f04840"/><rect x="793.97" y="543.8" width="5.7" height="15.0" fill="#29ab93"/><rect x="801.03" y="544.5" width="5.7" height="88.1" fill="#f04840"/><rect x="808.10" y="610.4" width="5.7" height="22.2" fill="#29ab93"/><rect x="815.16" y="583.2" width="5.7" height="27.2" fill="#29ab93"/><rect x="822.23" y="583.2" width="5.7" height="20.0" fill="#f04840"/><rect x="829.30" y="601.1" width="5.7" height="33.6" fill="#f04840"/><rect x="836.36" y="635.4" width="5.7" height="2.0" fill="#f04840"/><rect x="843.43" y="637.6" width="5.7" height="23.6" fill="#f04840"/><rect x="850.49" y="660.5" width="5.7" height="5.7" fill="#f04840"/><rect x="857.56" y="664.8" width="5.7" height="2.0" fill="#29ab93"/><rect x="864.62" y="644.8" width="5.7" height="20.7" fill="#29ab93"/><rect x="871.69" y="641.2" width="5.7" height="4.3" fill="#29ab93"/><rect x="878.75" y="640.5" width="5.7" height="2.0" fill="#f04840"/><rect x="885.82" y="591.7" width="5.7" height="50.2" fill="#29ab93"/><rect x="892.88" y="591.4" width="5.7" height="13.8" fill="#f04840"/><rect x="899.95" y="572.6" width="5.7" height="32.6" fill="#29ab93"/><rect x="907.02" y="492.5" width="5.7" height="82.1" fill="#29ab93"/><rect x="914.08" y="439.0" width="5.7" height="53.5" fill="#29ab93"/><rect x="921.15" y="439.0" width="5.7" height="13.9" fill="#f04840"/><rect x="928.21" y="451.9" width="5.7" height="3.0" fill="#f04840"/><rect x="935.28" y="452.9" width="5.7" height="2.0" fill="#f04840"/><rect x="942.34" y="451.9" width="5.7" height="4.0" fill="#29ab93"/><rect x="949.41" y="451.9" width="5.7" height="22.8" fill="#f04840"/><rect x="956.47" y="473.7" width="5.7" height="3.0" fill="#f04840"/><rect x="963.54" y="477.7" width="5.7" height="2.9" fill="#f04840"/><rect x="970.61" y="461.8" width="5.7" height="18.8" fill="#29ab93"/><rect x="977.67" y="462.8" width="5.7" height="12.9" fill="#f04840"/><rect x="984.74" y="474.7" width="5.7" height="66.3" fill="#f04840"/><rect x="991.80" y="540.0" width="5.7" height="13.8" fill="#f04840"/><rect x="998.87" y="552.8" width="5.7" height="25.7" fill="#f04840"/><rect x="1005.93" y="569.6" width="5.7" height="4.0" fill="#29ab93"/><rect x="1013.00" y="569.6" width="5.7" height="6.0" fill="#f04840"/><rect x="1020.06" y="574.3" width="5.7" height="54.6" fill="#f04840"/><rect x="1027.13" y="628.0" width="5.7" height="2.6" fill="#f04840"/><rect x="1034.19" y="598.2" width="5.7" height="33.3" fill="#29ab93"/><rect x="1041.26" y="553.9" width="5.7" height="44.3" fill="#29ab93"/><rect x="1048.33" y="537.7" width="5.7" height="17.0" fill="#29ab93"/><rect x="1055.39" y="484.0" width="5.7" height="53.7" fill="#29ab93"/><rect x="1062.46" y="484.0" width="5.7" height="15.3" fill="#f04840"/><rect x="1069.52" y="498.4" width="5.7" height="22.2" fill="#f04840"/><rect x="1076.59" y="512.1" width="5.7" height="8.5" fill="#29ab93"/><rect x="1083.65" y="511.2" width="5.7" height="37.6" fill="#f04840"/><rect x="1090.72" y="548.8" width="5.7" height="12.7" fill="#f04840"/><rect x="1097.78" y="531.7" width="5.7" height="29.8" fill="#29ab93"/><rect x="1104.85" y="530.8" width="5.7" height="29.0" fill="#f04840"/><rect x="1111.92" y="554.7" width="5.7" height="5.1" fill="#29ab93"/><rect x="1118.98" y="460.9" width="5.7" height="93.8" fill="#29ab93"/><rect x="1126.05" y="461.8" width="5.7" height="3.4" fill="#f04840"/><rect x="1133.11" y="465.2" width="5.7" height="15.3" fill="#f04840"/><rect x="1140.18" y="479.7" width="5.7" height="17.9" fill="#f04840"/><rect x="1147.24" y="496.7" width="5.7" height="12.0" fill="#f04840"/><rect x="1154.31" y="507.8" width="5.7" height="33.3" fill="#f04840"/><rect x="1161.37" y="534.3" width="5.7" height="5.9" fill="#29ab93"/><rect x="1168.44" y="518.0" width="5.7" height="15.4" fill="#29ab93"/><rect x="1175.50" y="518.0" width="5.7" height="2.6" fill="#f04840"/><rect x="1182.57" y="520.6" width="5.7" height="21.3" fill="#f04840"/><rect x="1189.64" y="498.4" width="5.7" height="43.5" fill="#29ab93"/><rect x="1196.70" y="454.6" width="5.7" height="44.2" fill="#29ab93"/><rect x="1203.77" y="367.1" width="5.7" height="87.5" fill="#29ab93"/><rect x="1210.83" y="341.3" width="5.7" height="25.8" fill="#29ab93"/><rect x="1217.90" y="340.4" width="5.7" height="46.9" fill="#f04840"/><rect x="1224.96" y="387.3" width="5.7" height="6.5" fill="#f04840"/><rect x="1232.03" y="393.8" width="5.7" height="14.7" fill="#f04840"/><rect x="1239.09" y="378.1" width="5.7" height="30.4" fill="#29ab93"/><rect x="1246.16" y="378.1" width="5.7" height="47.9" fill="#f04840"/><rect x="1253.23" y="425.1" width="5.7" height="12.0" fill="#f04840"/><rect x="1260.29" y="436.2" width="5.7" height="2.0" fill="#f04840"/><rect x="1267.36" y="428.8" width="5.7" height="10.1" fill="#29ab93"/><rect x="1274.42" y="426.0" width="5.7" height="2.0" fill="#f04840"/><rect x="1281.49" y="429.7" width="5.7" height="29.5" fill="#f04840"/><rect x="1288.55" y="458.2" width="5.7" height="67.3" fill="#f04840"/><rect x="1295.62" y="521.8" width="5.7" height="2.7" fill="#29ab93"/><rect x="1302.68" y="519.9" width="5.7" height="5.6" fill="#f04840"/><rect x="1309.75" y="521.8" width="5.7" height="2.0" fill="#29ab93"/><rect x="1316.81" y="520.9" width="5.7" height="2.0" fill="#29ab93"/><rect x="1323.88" y="516.3" width="5.7" height="4.6" fill="#29ab93"/><rect x="1330.95" y="516.3" width="5.7" height="5.5" fill="#f04840"/><rect x="1338.01" y="521.8" width="5.7" height="23.9" fill="#f04840"/><rect x="1345.08" y="532.8" width="5.7" height="12.9" fill="#29ab93"/><rect x="1352.14" y="532.8" width="5.7" height="20.3" fill="#f04840"/><rect x="1359.21" y="545.7" width="5.7" height="7.4" fill="#29ab93"/><rect x="1366.27" y="546.6" width="5.7" height="2.8" fill="#f04840"/><rect x="1373.34" y="549.4" width="5.7" height="8.3" fill="#f04840"/><rect x="1380.40" y="537.4" width="5.7" height="20.3" fill="#29ab93"/><rect x="1387.47" y="536.8" width="5.7" height="26.3" fill="#f04840"/><rect x="1394.54" y="526.3" width="5.7" height="36.8" fill="#29ab93"/><rect x="1401.60" y="519.6" width="5.7" height="6.7" fill="#29ab93"/><rect x="1408.67" y="512.8" width="5.7" height="6.8" fill="#29ab93"/><rect x="1415.73" y="485.0" width="5.7" height="27.1" fill="#29ab93"/><rect x="1422.80" y="473.8" width="5.7" height="11.2" fill="#29ab93"/><rect x="1429.86" y="473.8" width="5.7" height="39.0" fill="#f04840"/><rect x="1436.93" y="480.5" width="5.7" height="32.3" fill="#29ab93"/><rect x="1443.99" y="458.0" width="5.7" height="23.3" fill="#29ab93"/><rect x="1451.06" y="448.3" width="5.7" height="9.7" fill="#29ab93"/><rect x="1458.12" y="431.8" width="5.7" height="16.5" fill="#29ab93"/><rect x="1465.19" y="431.8" width="5.7" height="39.7" fill="#f04840"/><rect x="1472.26" y="470.8" width="5.7" height="2.0" fill="#f04840"/><rect x="1479.32" y="470.8" width="5.7" height="16.5" fill="#f04840"/><rect x="1486.39" y="486.5" width="5.7" height="7.5" fill="#f04840"/><rect x="1493.45" y="488.8" width="5.7" height="5.2" fill="#29ab93"/><rect x="1500.52" y="459.5" width="5.7" height="29.3" fill="#29ab93"/><rect x="1507.58" y="434.8" width="5.7" height="25.5" fill="#29ab93"/><rect x="1514.65" y="434.8" width="5.7" height="23.2" fill="#f04840"/><rect x="1521.71" y="457.3" width="5.7" height="27.7" fill="#f04840"/><rect x="1528.78" y="467.8" width="5.7" height="17.2" fill="#29ab93"/><rect x="1535.85" y="447.5" width="5.7" height="21.0" fill="#29ab93"/><rect x="1542.91" y="438.5" width="5.7" height="9.0" fill="#29ab93"/><rect x="1549.98" y="438.5" width="5.7" height="3.0" fill="#f04840"/><rect x="1557.04" y="437.0" width="5.7" height="4.5" fill="#29ab93"/><rect x="1564.11" y="395.5" width="5.7" height="43.6" fill="#29ab93"/><rect x="1571.17" y="395.5" width="5.7" height="19.6" fill="#f04840"/><rect x="1578.24" y="394.4" width="5.7" height="20.7" fill="#29ab93"/><rect x="1585.30" y="387.8" width="5.7" height="6.6" fill="#29ab93"/><rect x="1592.37" y="387.8" width="5.7" height="24.0" fill="#f04840"/><rect x="1599.43" y="411.8" width="5.7" height="8.8" fill="#f04840"/><rect x="1606.50" y="411.8" width="5.7" height="8.8" fill="#29ab93"/><rect x="1613.57" y="412.9" width="5.7" height="21.9" fill="#f04840"/><rect x="1620.63" y="433.7" width="5.7" height="3.2" fill="#f04840"/><rect x="1627.70" y="435.9" width="5.7" height="2.0" fill="#29ab93"/><rect x="1634.76" y="434.8" width="5.7" height="2.1" fill="#29ab93"/><rect x="1641.83" y="416.2" width="5.7" height="17.5" fill="#29ab93"/><rect x="1648.89" y="416.2" width="5.7" height="2.0" fill="#f04840"/><rect x="1655.96" y="408.6" width="5.7" height="8.7" fill="#29ab93"/><rect x="1663.02" y="394.4" width="5.7" height="14.2" fill="#29ab93"/><rect x="1670.09" y="394.4" width="5.7" height="24.0" fill="#f04840"/><rect x="1677.16" y="399.8" width="5.7" height="20.8" fill="#29ab93"/><rect x="1684.22" y="340.9" width="5.7" height="61.1" fill="#29ab93"/><rect x="1691.29" y="288.5" width="5.7" height="53.5" fill="#29ab93"/><rect x="1698.35" y="276.5" width="5.7" height="12.0" fill="#29ab93"/><rect x="1705.42" y="256.8" width="5.7" height="19.7" fill="#29ab93"/><rect x="1712.48" y="251.3" width="5.7" height="4.4" fill="#29ab93"/><rect x="1719.55" y="200.1" width="5.7" height="52.9" fill="#29ab93"/><rect x="1726.61" y="179.7" width="5.7" height="21.7" fill="#29ab93"/><rect x="1733.68" y="179.7" width="5.7" height="30.7" fill="#f04840"/><rect x="1740.74" y="203.0" width="5.7" height="4.9" fill="#29ab93"/><rect x="1747.81" y="203.4" width="5.7" height="2.0" fill="#f04840"/><rect x="1754.88" y="203.8" width="5.7" height="9.8" fill="#f04840"/><rect x="1761.94" y="210.4" width="5.7" height="2.0" fill="#29ab93"/><rect x="1769.01" y="211.2" width="5.7" height="2.0" fill="#f04840"/><rect x="1776.07" y="190.7" width="5.7" height="21.3" fill="#29ab93"/><rect x="1783.14" y="190.7" width="5.7" height="22.9" fill="#f04840"/><rect x="1790.20" y="213.3" width="5.7" height="44.2" fill="#f04840"/><rect x="1797.27" y="256.6" width="5.7" height="76.4" fill="#f04840"/><rect x="1804.33" y="331.1" width="5.7" height="2.0" fill="#f04840"/><rect x="1811.40" y="317.3" width="5.7" height="16.6" fill="#29ab93"/><rect x="1818.47" y="309.0" width="5.7" height="8.3" fill="#29ab93"/><rect x="1825.53" y="309.0" width="5.7" height="43.3" fill="#f04840"/><rect x="1832.60" y="351.4" width="5.7" height="2.0" fill="#29ab93"/><rect x="1839.66" y="351.4" width="5.7" height="45.1" fill="#f04840"/><rect x="1846.73" y="375.3" width="5.7" height="21.2" fill="#29ab93"/><rect x="1853.79" y="374.4" width="5.7" height="3.7" fill="#f04840"/><rect x="1860.86" y="365.2" width="5.7" height="12.9" fill="#29ab93"/><rect x="1867.92" y="364.3" width="5.7" height="2.0" fill="#f04840"/><rect x="1874.99" y="366.1" width="5.7" height="10.2" fill="#f04840"/><rect x="1882.05" y="374.4" width="5.7" height="7.4" fill="#f04840"/><rect x="1889.12" y="380.0" width="5.7" height="2.0" fill="#f04840"/><rect x="1896.19" y="370.7" width="5.7" height="12.9" fill="#29ab93"/><rect x="1903.25" y="363.4" width="5.7" height="8.3" fill="#29ab93"/><rect x="1910.32" y="361.5" width="5.7" height="2.8" fill="#29ab93"/><rect x="1917.38" y="358.8" width="5.7" height="2.0" fill="#29ab93"/><rect x="1924.45" y="359.7" width="5.7" height="2.0" fill="#f04840"/><rect x="1931.51" y="362.4" width="5.7" height="2.0" fill="#f04840"/><rect x="1938.58" y="364.4" width="5.7" height="62.9" fill="#f04840"/><rect x="1945.64" y="400.7" width="5.7" height="26.6" fill="#29ab93"/><rect x="1952.71" y="400.7" width="5.7" height="19.5" fill="#f04840"/><rect x="1959.78" y="418.9" width="5.7" height="23.3" fill="#f04840"/><rect x="1966.84" y="429.2" width="5.7" height="11.7" fill="#29ab93"/><rect x="1973.91" y="428.6" width="5.7" height="18.8" fill="#f04840"/><rect x="1980.97" y="446.7" width="5.7" height="9.1" fill="#f04840"/><rect x="1988.04" y="453.9" width="5.7" height="2.0" fill="#f04840"/><rect x="1995.10" y="456.4" width="5.7" height="7.8" fill="#f04840"/><rect x="2002.17" y="380.6" width="5.7" height="83.6" fill="#29ab93"/><rect x="2009.23" y="381.3" width="5.7" height="5.2" fill="#f04840"/><rect x="2016.30" y="363.1" width="5.7" height="24.0" fill="#29ab93"/><rect x="2023.36" y="362.5" width="5.7" height="2.6" fill="#f04840"/><rect x="2030.43" y="365.1" width="5.7" height="9.1" fill="#f04840"/><rect x="2037.50" y="351.5" width="5.7" height="22.7" fill="#29ab93"/><rect x="2044.56" y="351.5" width="5.7" height="2.0" fill="#29ab93"/><rect x="2051.63" y="351.5" width="5.7" height="29.1" fill="#f04840"/><rect x="2058.69" y="380.6" width="5.7" height="17.5" fill="#f04840"/><rect x="2065.76" y="361.2" width="5.7" height="36.9" fill="#29ab93"/><rect x="2072.82" y="359.2" width="5.7" height="2.0" fill="#29ab93"/><rect x="2079.89" y="353.4" width="5.7" height="5.8" fill="#29ab93"/><rect x="2086.95" y="333.3" width="5.7" height="20.1" fill="#29ab93"/><rect x="2094.02" y="333.3" width="5.7" height="22.1" fill="#f04840"/><rect x="2101.09" y="346.3" width="5.7" height="9.1" fill="#29ab93"/><rect x="2108.15" y="346.3" width="5.7" height="3.2" fill="#f04840"/><rect x="2115.22" y="348.9" width="5.7" height="15.5" fill="#f04840"/><rect x="2122.28" y="363.8" width="5.7" height="27.2" fill="#f04840"/><rect x="2129.35" y="390.4" width="5.7" height="51.8" fill="#f04840"/><rect x="2136.41" y="440.0" width="5.7" height="2.0" fill="#29ab93"/><rect x="2143.48" y="440.0" width="5.7" height="20.8" fill="#f04840"/><rect x="2150.54" y="450.1" width="5.7" height="11.1" fill="#29ab93"/><rect x="2157.61" y="448.4" width="5.7" height="2.0" fill="#29ab93"/><rect x="2164.67" y="444.8" width="5.7" height="2.0" fill="#29ab93"/><rect x="2171.74" y="443.0" width="5.7" height="71.0" fill="#f04840"/><rect x="2178.81" y="512.6" width="5.7" height="2.0" fill="#f04840"/><rect x="2185.87" y="512.6" width="5.7" height="2.0" fill="#29ab93"/><rect x="2192.94" y="511.3" width="5.7" height="2.0" fill="#29ab93"/><rect x="2200.00" y="512.2" width="5.7" height="2.7" fill="#f04840"/><rect x="2207.07" y="499.3" width="5.7" height="16.0" fill="#29ab93"/><rect x="2214.13" y="499.3" width="5.7" height="8.0" fill="#f04840"/><rect x="2221.20" y="506.0" width="5.7" height="2.0" fill="#29ab93"/>
<rect x="19" y="636" width="2371" height="101" fill="#2962ff" fill-opacity="0.25"/>
<rect x="19" y="635" width="2371" height="2" fill="#4261cc"/>
<rect x="19" y="736" width="2371" height="2" fill="#4261cc"/>
<rect x="19" y="917.4" width="2371" height="102.60000000000002" fill="#2962ff" fill-opacity="0.25"/>
<rect x="19" y="916.4" width="2371" height="2" fill="#4261cc"/>
<rect x="19" y="1019" width="2371" height="2" fill="#4261cc"/>
<line x1="922.9" y1="367.6" x2="2140.6" y2="163.5" stroke="#ffffff" stroke-width="3.9" stroke-linecap="round"/>
<line x1="865.9" y1="690.3" x2="2140.6" y2="455.3" stroke="#ffffff" stroke-width="3.9" stroke-linecap="round"/>
<circle cx="2224.9" cy="1053.3" r="18.2" fill="#0e0c12" stroke="#a65ac0" stroke-width="2.6"/>
<path d="M2229.8 1044.3 L2223.2 1053.3 M2227.0 1053.6 L2220.2 1062.2" fill="none" stroke="#b058cc" stroke-width="2.5" stroke-linecap="round"/><path d="M2216.2 1053.7 L2223 1052.2 L2232.2 1053.1 L2226 1054.9 Z" fill="#b870d0"/>
</g>
<g clip-path="url(#rsiclip)">
<line x1="20" y1="1143.2" x2="2390" y2="1143.2" stroke="#82858d" stroke-width="2.2" stroke-dasharray="9.6 11.185" stroke-dashoffset="1.5"/>
<line x1="20" y1="1204.4" x2="2390" y2="1204.4" stroke="#82858d" stroke-width="2.2" stroke-dasharray="9.6 11.185" stroke-dashoffset="1.5"/>
<line x1="20" y1="1265.5" x2="2390" y2="1265.5" stroke="#82858d" stroke-width="2.2" stroke-dasharray="9.6 11.185" stroke-dashoffset="1.5"/>
<polyline fill="none" stroke="#c8dbf4" stroke-width="3.5" stroke-linejoin="round" points="18.3,1265.5 26.7,1250.2 33.7,1257.8 40.8,1264.4 47.9,1267.5 54.9,1269.5 62.0,1287.1 69.1,1290.8 76.1,1301.2 83.2,1276.7 90.3,1274.2 97.3,1261.8 104.4,1245.6 111.5,1220.6 118.5,1221.5 125.6,1216.2 132.7,1228.7 139.7,1230.4 146.8,1219.7 153.9,1208.3 160.9,1209.7 168.0,1212.4 175.1,1209.8 182.1,1194.1 189.2,1202.7 196.3,1196.3 203.3,1209.4 210.4,1205.5 217.4,1217.7 224.5,1229.1 231.6,1215.8 238.6,1192.1 245.7,1201.6 252.8,1214.3 259.8,1230.2 266.9,1231.8 274.0,1223.7 281.0,1224.9 288.1,1223.7 295.2,1227.7 302.2,1245.7 309.3,1244.3 316.4,1251.4 323.4,1239.1 330.5,1242.6 337.6,1228.3 344.6,1228.7 351.7,1217.9 358.8,1234.0 365.8,1241.6 372.9,1229.8 380.0,1226.6 387.0,1233.8 394.1,1220.5 401.1,1187.2 408.2,1178.6 415.3,1183.6 422.3,1181.3 429.4,1180.0 436.5,1163.8 443.5,1171.4 450.6,1170.4 457.7,1171.4 464.7,1189.9 471.8,1175.3 478.9,1192.7 485.9,1216.8 493.0,1241.8 500.1,1229.5 507.1,1232.5 514.2,1225.7 521.3,1223.3 528.3,1231.2 535.4,1221.3 542.5,1208.3 549.5,1215.2 556.6,1214.0 563.7,1224.1 570.7,1221.7 577.8,1205.1 584.9,1209.0 591.9,1205.7 599.0,1192.5 606.0,1215.9 613.1,1211.6 620.2,1233.7 627.2,1223.9 634.3,1213.7 641.4,1207.8 648.4,1225.3 655.5,1235.8 662.6,1225.3 669.6,1220.0 676.7,1217.1 683.8,1212.9 690.8,1223.9 697.9,1209.2 705.0,1209.2 712.0,1205.4 719.1,1213.4 726.2,1209.8 733.2,1198.7 740.3,1190.3 747.4,1189.3 754.4,1205.1 761.5,1200.7 768.6,1200.7 775.6,1195.8 782.7,1221.4 789.8,1228.9 796.8,1214.1 803.9,1265.4 810.9,1246.5 818.0,1226.3 825.1,1236.2 832.1,1250.0 839.2,1250.7 846.3,1260.8 853.3,1262.7 860.4,1261.4 867.5,1243.7 874.5,1240.6 881.6,1241.0 888.7,1202.0 895.7,1210.7 902.8,1190.4 909.9,1155.3 916.9,1139.4 924.0,1148.3 931.1,1149.7 938.1,1149.7 945.2,1148.6 952.3,1165.7 959.3,1167.2 966.4,1170.2 973.5,1161.2 980.5,1172.4 987.6,1213.9 994.7,1220.4 1001.7,1232.1 1008.8,1226.3 1015.8,1229.3 1022.9,1252.3 1030.0,1252.9 1037.0,1230.4 1044.1,1205.1 1051.2,1197.0 1058.2,1174.0 1065.3,1182.5 1072.4,1193.8 1079.4,1189.9 1086.5,1208.7 1093.6,1214.6 1100.6,1199.6 1107.7,1213.1 1114.8,1210.4 1121.8,1171.4 1128.9,1173.7 1136.0,1181.7 1143.0,1190.5 1150.1,1196.2 1157.2,1211.6 1164.2,1208.2 1171.3,1200.1 1178.4,1201.5 1185.4,1212.8 1192.5,1190.6 1199.6,1172.5 1206.6,1146.1 1213.7,1140.0 1220.7,1164.0 1227.8,1167.2 1234.9,1174.6 1241.9,1164.8 1249.0,1187.7 1256.1,1192.6 1263.1,1192.6 1270.2,1189.1 1277.3,1188.3 1284.3,1204.9 1291.4,1232.2 1298.5,1230.3 1305.5,1231.7 1312.6,1229.5 1319.7,1229.0 1326.7,1225.9 1333.8,1228.8 1340.9,1240.5 1347.9,1231.0 1355.0,1240.9 1362.1,1235.2 1369.1,1237.1 1376.2,1241.6 1383.3,1224.7 1390.3,1239.0 1397.4,1212.3 1404.5,1207.9 1411.5,1203.4 1418.6,1186.3 1425.6,1180.0 1432.7,1206.4 1439.8,1188.2 1446.8,1177.2 1453.9,1172.6 1461.0,1165.1 1468.0,1191.7 1475.1,1191.7 1482.2,1201.7 1489.2,1205.8 1496.3,1202.5 1503.4,1184.8 1510.4,1172.0 1517.5,1188.4 1524.6,1205.3 1531.6,1195.4 1538.7,1184.6 1545.8,1179.9 1552.8,1182.1 1559.9,1179.6 1567.0,1158.8 1574.0,1173.9 1581.1,1164.2 1588.2,1161.2 1595.2,1179.7 1602.3,1186.1 1609.4,1181.1 1616.4,1197.8 1623.5,1199.3 1630.5,1198.6 1637.6,1197.8 1644.7,1184.3 1651.7,1185.3 1658.8,1179.0 1665.9,1169.2 1672.9,1192.2 1680.0,1179.2 1687.1,1148.5 1694.1,1130.4 1701.2,1126.9 1708.3,1121.4 1715.3,1119.9 1722.4,1107.9 1729.5,1104.0 1736.5,1129.8 1743.6,1127.8 1750.7,1129.2 1757.7,1137.1 1764.8,1136.0 1771.9,1137.6 1778.9,1129.7 1786.0,1151.5 1793.1,1185.6 1800.1,1225.9 1807.2,1225.9 1814.2,1216.5 1821.3,1211.7 1828.4,1232.4 1835.4,1231.8 1842.5,1250.2 1849.6,1236.5 1856.6,1237.6 1863.7,1229.1 1870.8,1229.1 1877.8,1234.7 1884.9,1237.5 1892.0,1237.5 1899.0,1228.0 1906.1,1221.9 1913.2,1220.3 1920.2,1217.8 1927.3,1220.0 1934.4,1222.3 1941.4,1261.5 1948.5,1237.0 1955.6,1247.1 1962.6,1257.4 1969.7,1245.9 1976.8,1254.5 1983.8,1258.3 1990.9,1258.3 1998.0,1262.4 2005.0,1197.7 2012.1,1201.3 2019.1,1188.0 2026.2,1189.4 2033.3,1195.8 2040.3,1182.4 2047.4,1182.4 2054.5,1203.6 2061.5,1214.8 2068.6,1191.6 2075.7,1190.4 2082.7,1187.0 2089.8,1175.4 2096.9,1192.1 2103.9,1186.6 2111.0,1189.1 2118.1,1200.6 2125.1,1218.7 2132.2,1245.6 2139.3,1243.8 2146.3,1253.3 2153.4,1244.4 2160.5,1242.9 2167.5,1239.7 2174.6,1270.0 2181.7,1269.2 2188.7,1268.7 2195.8,1267.4 2202.9,1269.0 2209.9,1252.6 2217.0,1256.8 2224.0,1255.3"/>
</g>
<g font-size="24" letter-spacing="0.33" fill="#b2b5be">
<text x="2408.5" y="144.0">2,400.00</text>
<text x="2408.5" y="236.2">2,300.00</text>
<text x="2408.5" y="328.4">2,200.00</text>
<text x="2408.5" y="420.6">2,100.00</text>
<text x="2408.5" y="605.0">1,900.00</text>
<text x="2408.5" y="697.1">1,800.00</text>
<text x="2408.5" y="789.3">1,700.00</text>
<text x="2408.5" y="881.5">1,600.00</text>
<text x="2408.5" y="973.7">1,500.00</text>
<text x="2408.5" y="1065.9">1,400.00</text>
<text x="2408.5" y="1121.7">80.00</text>
<text x="2408.5" y="1182.8">60.00</text>
<text x="2408.5" y="1243.9">40.00</text>
<text x="2408.5" y="1305.0">20.00</text>
</g>
<rect x="2398" y="59" width="135" height="48" rx="8" fill="#0f0f0f" stroke="#2a2e39" stroke-width="1.5"/>
<text x="2415" y="91.5" font-size="24" letter-spacing="-1.4" fill="#ececec">USDT</text>
<path d="M2391 490 H2512 a4 4 0 0 1 4 4 V544 a4 4 0 0 1 -4 4 H2391 Z" fill="#5f626b"/>
<text x="2408.5" y="513.3" font-size="24" letter-spacing="0.33" fill="#ffffff">2,000.00</text>
<text x="2408.5" y="539.2" font-size="24" letter-spacing="0.2" fill="#e6e7ea">03:46:21</text>
<g clip-path="url(#timeclip)" font-size="24" fill="#b2b5be" text-anchor="middle">
<text x="125.6" y="1359">7</text>
<text x="252.8" y="1359">10</text>
<text x="380.0" y="1359">13</text>
<text x="507.2" y="1359">16</text>
<text x="634.5" y="1359">19</text>
<text x="761.7" y="1359">22</text>
<text x="888.9" y="1359">25</text>
<text x="1057.5" y="1359" font-weight="bold" fill="#c8cbd3">Mar</text>
<text x="1185.7" y="1359">4</text>
<text x="1312.9" y="1359">7</text>
<text x="1440.2" y="1359">10</text>
<text x="1567.4" y="1359">13</text>
<text x="1694.6" y="1359">16</text>
<text x="1821.8" y="1359">19</text>
<text x="1949.0" y="1359">22</text>
<text x="2076.2" y="1359">25</text>
<text x="2203.4" y="1359">28</text>
<text x="2372.1" y="1359" font-weight="bold" fill="#c8cbd3">Apr</text>
</g>
<g fill="#e0e0e0">
<path d="M22.4 1417 H45.4 V1445.8 H33.6 V1428.2 H22.4 Z"/>
<circle cx="54.5" cy="1422.9" r="5.9"/>
<path d="M64.3 1417 H78.8 L68.9 1445.8 H55.2 Z"/>
<text x="92.5" y="1445.8" font-size="41" font-weight="bold" letter-spacing="-1.16">TradingView</text>
</g>
</svg></body></html>
